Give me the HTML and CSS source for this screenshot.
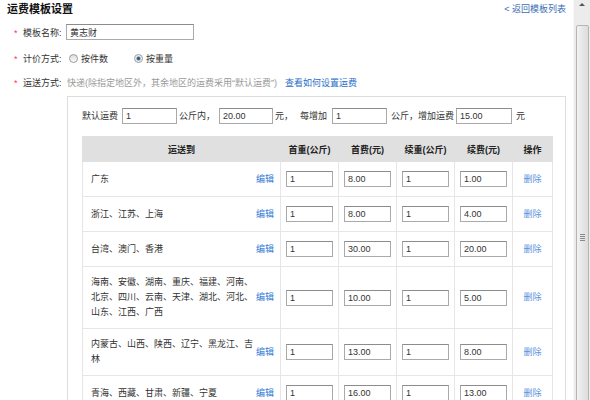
FILE: index.html
```html
<!DOCTYPE html>
<html>
<head>
<title>运费模板设置</title>
<meta http-equiv="Content-Type" content="text/html; charset=utf-8"/>
<link rel="stylesheet" href="styles.css">
</head>
<body>
<div class="page">
<div class="main">
  <div class="head">
    <h2>运费模板设置</h2>
    <a class="back" href="#">&lt; 返回模板列表</a>
  </div>

  <div class="form-row r1">
    <span class="star">*</span><span class="label">模板名称:</span>
    <input class="txt name" type="text" value="黄志财">
  </div>
  <div class="form-row r2">
    <span class="star">*</span><span class="label">计价方式:</span>
    <span class="radio"></span><span class="opt">按件数</span>
    <span class="radio on second"></span><span class="opt">按重量</span>
  </div>
  <div class="form-row r3">
    <span class="star">*</span><span class="label">运送方式:</span>
    <span class="tip">快递(除指定地区外，其余地区的运费采用“默认运费”)</span>
    <a class="howto" href="#">查看如何设置运费</a>
  </div>

  <div class="box">
    <div class="fee">
      默认运费<input class="txt f1" type="text" value="1"><span class="t1">公斤内，</span><input class="txt f2" type="text" value="20.00"><span class="t2">元，</span><span class="t3">每增加</span><input class="txt f3" type="text" value="1"><span class="t4">公斤，增加运费</span><input class="txt f4" type="text" value="15.00"><span class="t5">元</span>
    </div>

    <table class="grid">
      <colgroup>
        <col style="width:198px"><col style="width:58px"><col style="width:58px"><col style="width:58px"><col style="width:58px"><col style="width:40px">
      </colgroup>
      <tr>
        <th>运送到</th><th>首重(公斤)</th><th>首费(元)</th><th>续重(公斤)</th><th>续费(元)</th><th>操作</th>
      </tr>
      <tr>
        <td class="area"><div class="area-in"><span class="areas">广东</span><a class="edit" href="#">编辑</a></div></td>
        <td><input class="cell" type="text" value="1"></td>
        <td><input class="cell" type="text" value="8.00"></td>
        <td><input class="cell" type="text" value="1"></td>
        <td><input class="cell" type="text" value="1.00"></td>
        <td><a class="del" href="#">删除</a></td>
      </tr>
      <tr>
        <td class="area"><div class="area-in"><span class="areas">浙江、江苏、上海</span><a class="edit" href="#">编辑</a></div></td>
        <td><input class="cell" type="text" value="1"></td>
        <td><input class="cell" type="text" value="8.00"></td>
        <td><input class="cell" type="text" value="1"></td>
        <td><input class="cell" type="text" value="4.00"></td>
        <td><a class="del" href="#">删除</a></td>
      </tr>
      <tr>
        <td class="area"><div class="area-in"><span class="areas">台湾、澳门、香港</span><a class="edit" href="#">编辑</a></div></td>
        <td><input class="cell" type="text" value="1"></td>
        <td><input class="cell" type="text" value="30.00"></td>
        <td><input class="cell" type="text" value="1"></td>
        <td><input class="cell" type="text" value="20.00"></td>
        <td><a class="del" href="#">删除</a></td>
      </tr>
      <tr>
        <td class="area"><div class="area-in"><span class="areas">海南、安徽、湖南、重庆、福建、河南、北京、四川、云南、天津、湖北、河北、山东、江西、广西</span><a class="edit" href="#">编辑</a></div></td>
        <td><input class="cell" type="text" value="1"></td>
        <td><input class="cell" type="text" value="10.00"></td>
        <td><input class="cell" type="text" value="1"></td>
        <td><input class="cell" type="text" value="5.00"></td>
        <td><a class="del" href="#">删除</a></td>
      </tr>
      <tr>
        <td class="area"><div class="area-in"><span class="areas">内蒙古、山西、陕西、辽宁、黑龙江、吉林</span><a class="edit" href="#">编辑</a></div></td>
        <td><input class="cell" type="text" value="1"></td>
        <td><input class="cell" type="text" value="13.00"></td>
        <td><input class="cell" type="text" value="1"></td>
        <td><input class="cell" type="text" value="8.00"></td>
        <td><a class="del" href="#">删除</a></td>
      </tr>
      <tr>
        <td class="area"><div class="area-in"><span class="areas">青海、西藏、甘肃、新疆、宁夏</span><a class="edit" href="#">编辑</a></div></td>
        <td><input class="cell" type="text" value="1"></td>
        <td><input class="cell" type="text" value="16.00"></td>
        <td><input class="cell" type="text" value="1"></td>
        <td><input class="cell" type="text" value="13.00"></td>
        <td><a class="del" href="#">删除</a></td>
      </tr>
    </table>
  </div>
</div>

<div class="scrollbar">
  <div class="arrow"></div>
  <div class="thumb"><div class="grip"></div></div>
</div>
</div>
</body>
</html>
```

FILE: styles.css
```css
html, body {
    margin:0;
    padding:0;
    height:400px;
    overflow:hidden;
    background:#fff;
}
body {
    font-family:"Liberation Sans", "Noto Sans CJK SC", sans-serif;
    font-size:9px;
    color:#333;
}
a {
    text-decoration:none;
}
.page {
    display:flex;
    height:400px;
}
.main {
    width:573px;
    box-sizing:border-box;
    padding:0 7px 0 6px;
}
.head {
    display:flex;
    justify-content:space-between;
    align-items:center;
    height:16px;
}
.head h2 {
    margin:0;
    font-size:11px;
    font-weight:bold;
    color:#111;
    padding-left:1px;
}
.back {
    color:#3a6db3;
}

.form-row {
    display:flex;
    align-items:center;
    height:24px;
    padding-left:8px;
}
.r1 { margin-top:4px; }
.r2 { margin-top:2px; }
.star {
    width:9px;
    color:#f36;
    line-height:9px;
    padding-top:3px;
    box-sizing:border-box;
    height:12px;
}
.label {
    width:44px;
}
.txt {
    box-sizing:border-box;
    height:16px;
    border:1px solid #aaa;
    border-top-color:#8c8c8c;
    padding:0 3px;
    font-family:"Liberation Sans", "Noto Sans CJK SC", sans-serif;
    font-size:9px;
    color:#333;
    background:#fff;
    outline:none;
}
.name {
    width:128px;
    margin-left:-1px;
}
.radio {
    display:inline-block;
    box-sizing:border-box;
    width:9px;
    height:9px;
    border:1px solid #9a9a9a;
    border-radius:50%;
    background:linear-gradient(#dcdcdc, #fbfbfb);
    margin-left:2px;
}
.radio.on {
    background:radial-gradient(circle, #2c4f80 0, #4a6fa5 1.6px, #e8e8e8 2.4px, #fff 4px);
}
.radio.second {
    margin-left:26px;
}
.opt {
    margin-left:3px;
}
.tip {
    color:#999;
}
.howto {
    color:#2a6fc9;
    margin-left:8px;
}

.box {
    margin:2px 0 0 61px;
    border:1px solid #ddd;
    border-bottom:none;
    padding:10px 0 0 14px;
    height:400px;
}
.fee {
    display:flex;
    align-items:center;
    height:17px;
    white-space:nowrap;
}
.f1 { width:55px; margin-left:4px; }
.t1 { margin-left:2px; }
.f2 { width:54px; margin-left:4px; }
.t2 { margin-left:2px; }
.t3 { margin-left:7px; }
.f3 { width:55px; margin-left:5px; }
.t4 { margin-left:4px; }
.f4 { width:56px; margin-left:2px; }
.t5 { margin-left:4px; }

.grid {
    margin-top:12px;
    width:470px;
    table-layout:fixed;
    border-collapse:collapse;
    font-size:9px;
}
.grid th {
    height:24px;
    padding:0;
    background:#e0e0e0;
    border:1px solid #e0e0e0;
    font-weight:bold;
    color:#222;
    text-align:center;
}
.grid td {
    padding:8px 0;
    border:1px solid #e6e6e6;
    text-align:center;
    line-height:15px;
}
.grid td.area {
    padding:8px 6px 8px 8px;
    text-align:left;
}
.area-in {
    display:flex;
    align-items:center;
    justify-content:space-between;
}
.areas {
    width:162px;
}
.edit {
    color:#2f7bd5;
}
.cell {
    box-sizing:border-box;
    width:47px;
    height:16px;
    margin:1px 0;
    vertical-align:middle;
    border:1px solid #aaa;
    border-top-color:#8c8c8c;
    padding:0 3px;
    font-family:"Liberation Sans", "Noto Sans CJK SC", sans-serif;
    font-size:9px;
    color:#333;
    outline:none;
}
.del {
    color:#5a93dc;
}

.scrollbar {
    width:17px;
    height:400px;
    background:#ececec;
    border-left:1px solid #f8f8f8;
    box-sizing:border-box;
    overflow:hidden;
}
.arrow {
    height:25px;
    position:relative;
}
.arrow:before {
    content:"";
    position:absolute;
    left:5px;
    top:3px;
    border-left:3px solid transparent;
    border-right:3px solid transparent;
    border-bottom:3px solid #555;
}
.thumb {
    margin:0 1px 0 2px;
    height:430px;
    border:1px solid #b5b5b5;
    border-radius:2px;
    background:linear-gradient(90deg, #f2f2f2, #dcdcdc);
    box-sizing:border-box;
    padding-top:208px;
}
.grip {
    margin:0 auto;
    width:5px;
    height:7px;
    background:repeating-linear-gradient(#8a8a8a 0, #8a8a8a 1px, transparent 1px, transparent 2px);
}
```
